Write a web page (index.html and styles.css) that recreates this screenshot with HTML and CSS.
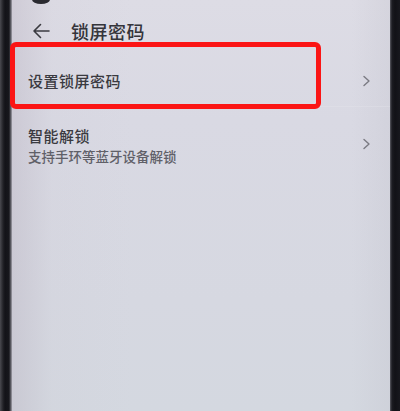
FILE: index.html
```html
<!DOCTYPE html>
<html lang="zh-CN">
<head>
<meta charset="utf-8">
<link rel="stylesheet" href="styles.css">
</head>
<body>
<div class="phone">
  <div class="bezel bezel-left"></div>
  <div class="screen">
    <div class="header">
      <svg class="back" width="18" height="16" viewBox="0 0 18 16"><path d="M17 8H2M8.5 1.5L2 8l6.5 6.5" fill="none" stroke="#3a3a40" stroke-width="1.6" stroke-linecap="round" stroke-linejoin="round"/></svg>
      <span class="title">锁屏密码</span>
    </div>
    <div class="row row-single">
      <span class="row-title">设置锁屏密码</span>
      <svg class="chev" width="9" height="12" viewBox="0 0 9 12"><path d="M2 1.5L7 6l-5 4.5" fill="none" stroke="#7a7a82" stroke-width="1.4" stroke-linecap="round" stroke-linejoin="round"/></svg>
    </div>
    <div class="row row-double">
      <div class="texts">
        <span class="row-title">智能解锁</span>
        <span class="row-sub">支持手环等蓝牙设备解锁</span>
      </div>
      <svg class="chev" width="9" height="12" viewBox="0 0 9 12"><path d="M2 1.5L7 6l-5 4.5" fill="none" stroke="#7a7a82" stroke-width="1.4" stroke-linecap="round" stroke-linejoin="round"/></svg>
    </div>
  </div>
  <div class="bezel bezel-right"></div>
  <div class="notch"></div>
  <div class="highlight"></div>
</div>
</body>
</html>
```

FILE: styles.css
```css
html, body {
  margin: 0;
  padding: 0;
}
body {
  width: 400px;
  height: 411px;
  overflow: hidden;
  font-family: "Noto Sans CJK SC", "Noto Sans", sans-serif;
  background: #15151b;
}
.phone {
  position: relative;
  display: flex;
  width: 400px;
  height: 411px;
}
.bezel-left {
  width: 12px;
  background: linear-gradient(to right, #4a4a50 0px, #232328 3px, #131318 5px, #17171c 9px, #6a6a72 11px, #a8a6b0 12px);
}
.bezel-right {
  width: 10px;
  background: linear-gradient(to right, #5a5a62 0px, #1c1c22 2px, #121217 5px, #18181e 10px);
}
.screen {
  flex: 1;
  display: flex;
  flex-direction: column;
  background:
    linear-gradient(to right, rgba(180,172,186,0.35) 0px, rgba(200,196,206,0.1) 40px, rgba(0,0,0,0) 120px, rgba(0,0,0,0) 340px, rgba(190,190,200,0.25) 378px),
    linear-gradient(to bottom, #dddce5 0px, #d9d9e3 120px, #d6d8e1 300px, #d4d8e0 411px);
}
.header {
  height: 56px;
  box-sizing: border-box;
  padding: 21px 0 0 20px;
  display: flex;
  align-items: flex-start;
}
.back {
  margin-top: 2px;
  margin-right: 21px;
}
.title {
  font-size: 18px;
  line-height: 20px;
  font-weight: 500;
  color: #34343a;
  letter-spacing: 0.5px;
}
.row {
  display: flex;
  align-items: center;
  justify-content: space-between;
  padding: 0 19px 0 16px;
}
.row-single {
  height: 50px;
}
.row-double {
  padding-top: 19px;
  padding-bottom: 10px;
  border-top: 1px solid rgba(228,228,236,0.35);
}
.texts {
  display: flex;
  flex-direction: column;
}
.row-title {
  font-size: 15px;
  line-height: 20px;
  font-weight: 500;
  color: #3a3a40;
  letter-spacing: 0.5px;
}
.row-sub {
  margin-top: 1px;
  font-size: 13.5px;
  line-height: 18px;
  font-weight: 500;
  color: #606068;
}
.chev {
  flex: none;
}
.row-double .chev {
  margin-top: -3px;
}
.notch {
  position: absolute;
  left: 32px;
  top: -5px;
  width: 18px;
  height: 9px;
  border-radius: 50%;
  background: #2a2a30;
}
.highlight {
  position: absolute;
  left: 10px;
  top: 42px;
  width: 311px;
  height: 67px;
  box-sizing: border-box;
  border: 5px solid #fb1515;
  border-radius: 6px;
}
```
